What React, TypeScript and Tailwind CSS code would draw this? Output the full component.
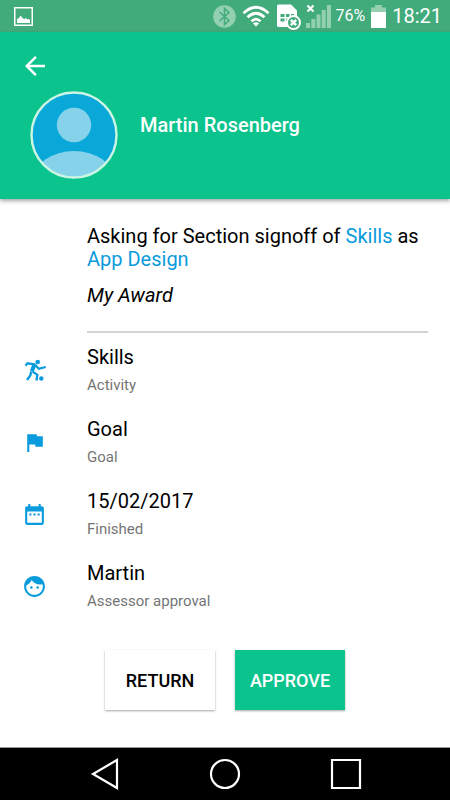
import type { ReactNode } from "react";
import { MdArrowBack, MdDateRange, MdFace, MdFlag } from "react-icons/md";

function StatusBar() {
  return (
    <div className="flex h-8 items-center bg-[#42ab7b] pr-2 pl-3.5 text-white">
      <svg width="19" height="19" viewBox="0 0 19 19" aria-label="Screenshot saved" role="img">
        <rect x="0.75" y="0.75" width="17.5" height="17.5" fill="none" stroke="white" strokeWidth="1.5" />
        <path d="M3 16v-4l2-1 1.5-2.5L9 11.5l1.5.5 1.4-.9 1.6 1.4 1.2-.4 1.3 1V16z" fill="white" />
      </svg>

      <div className="ml-auto flex items-center">
        <svg width="23" height="23" viewBox="0 0 23 23" aria-label="Bluetooth" role="img">
          <circle cx="11.5" cy="11.5" r="11.3" fill="#93cfb1" />
          <path d="M6.5 7l9.5 8.5-4.5 4v-16l4.5 4L6.500 16" fill="none" stroke="#42ab7b" strokeWidth="1.5" />
        </svg>
        <svg className="ml-1.5" width="28" height="22" viewBox="0 0 28 22" fill="none" stroke="white" strokeWidth="2.8" aria-label="Wi-Fi" role="img">
          <path d="M1.5 8.2Q14-3.8 26.5 8.2" />
          <path d="M5.5 12.3Q14 4.3 22.5 12.3" />
          <path d="M9.5 16.2Q14 12 18.5 16.2" />
          <path d="M11 18.5Q14 16 17 18.5L14 21.5z" fill="white" stroke="none" />
        </svg>
        <svg className="ml-1.5" width="25" height="27" viewBox="0 0 25 27" aria-label="No SIM" role="img">
          <path d="M2.5 1.5H15l6 6V24H2.500Q1 24 1 22.500V3q0-1.500 1.500-1.500z" fill="white" />
          <path d="M4.500 11h4v3h-4zM10 11h3.500v3H10zM15 11h3v3h-3zM4.500 15.500h4v3h-4zM10 15.500h2v3h-2z" fill="#42ab7b" />
          <circle cx="17.5" cy="19.5" r="6.5" fill="#42ab7b" stroke="white" strokeWidth="2" />
          <path d="M14.8 16.8l5.4 5.4m0-5.4l-5.4 5.4" stroke="white" strokeWidth="2.4" />
        </svg>
        <svg className="ml-1" width="26" height="25" viewBox="0 0 26 25" aria-label="No signal" role="img">
          <path d="M1 19h4v5H1zM6.300 15h4v9h-4zM11.500 10.500h4V24h-4zM16.700 6h4v18h-4zM21.900 1H26v23h-4.100z" fill="#93cfb1" />
          <path d="M2.5 1.5l6 6m0-6l-6 6" stroke="white" strokeWidth="2.2" />
        </svg>
        <span className="ml-1 text-base">76%</span>
        <svg className="ml-1.5" width="15" height="23" viewBox="0 0 15 23" aria-label="Battery" role="img">
          <path d="M4 0h7v2.5h4V7H0V2.500h4z" fill="#93cfb1" />
          <path d="M0 7h15v16H0z" fill="white" />
        </svg>
        <span className="ml-1.5 text-xl">18:21</span>
      </div>
    </div>
  );
}

function Avatar() {
  return (
    <svg width="88" height="88" viewBox="0 0 88 88" role="img" aria-label="Profile picture">
      <clipPath id="avatar-clip">
        <circle cx="44" cy="44" r="42" />
      </clipPath>
      <circle cx="44" cy="44" r="42" fill="#0aa8d9" />
      <g clipPath="url(#avatar-clip)" fill="#86d2ea">
        <circle cx="44" cy="34" r="17.2" />
        <ellipse cx="44" cy="88" rx="40" ry="28" />
      </g>
      <circle cx="44" cy="44" r="42.5" fill="none" stroke="#cdf5e3" strokeWidth="2.4" />
    </svg>
  );
}

function FootballIcon() {
  return (
    <svg width="25" height="25" viewBox="0 0 25 25" fill="none" stroke="currentColor" aria-hidden="true">
      <circle cx="15.7" cy="4" r="2.3" fill="currentColor" stroke="none" />
      <circle cx="19.3" cy="20.5" r="2.2" fill="currentColor" stroke="none" />
      <path d="M3.500 7.800L5.500 5.300L12.500 6.300L16.800 10.800L23.700 9" strokeWidth="2.2" />
      <path d="M12.300 7L9.800 13.300" strokeWidth="4" />
      <path d="M9.200 13.500L8.300 17.500L5 22" strokeWidth="2.3" />
      <path d="M10.500 13.600L15.300 16.800L14.500 22.500" strokeWidth="2.3" />
    </svg>
  );
}

function DetailRow({ icon, title, label }: { icon: ReactNode; title: string; label: string }) {
  return (
    <li className="flex h-18 items-center pl-[22px]">
      <span className="text-[#0a9bdc]">{icon}</span>
      <div className="ml-10 flex flex-col gap-1.5">
        <span className="text-xl leading-6 text-black">{title}</span>
        <span className="text-[15px] leading-5 text-[#757575]">{label}</span>
      </div>
    </li>
  );
}

function NavigationBar() {
  return (
    <nav className="mt-auto flex h-[53px] items-center justify-evenly border-t border-[#999] bg-black text-white">
      <button type="button" aria-label="Back">
        <svg width="32" height="32" viewBox="0 0 32 32" fill="none" stroke="currentColor" strokeWidth="2.2">
          <path d="M28 2v28L4 16z" />
        </svg>
      </button>
      <button type="button" aria-label="Home">
        <svg width="32" height="32" viewBox="0 0 32 32" fill="none" stroke="currentColor" strokeWidth="2.2">
          <circle cx="16" cy="16" r="14" />
        </svg>
      </button>
      <button type="button" aria-label="Recent apps">
        <svg width="32" height="32" viewBox="0 0 32 32" fill="none" stroke="currentColor" strokeWidth="2.2">
          <path d="M2 2h28v28H2z" />
        </svg>
      </button>
    </nav>
  );
}

export default function App() {
  return (
    <div className="flex min-h-screen flex-col bg-white font-['Roboto',sans-serif]">
      <StatusBar />

      <header className="bg-[#0ac38d] px-5 pt-[19px] pb-5 text-white shadow-[0_2px_4px_rgba(0,0,0,0.35)]">
        <button type="button" aria-label="Back" className="block">
          <MdArrowBack size={30} />
        </button>
        <div className="mt-2.5 ml-2.5 flex">
          <Avatar />
          <h1 className="mt-[22px] ml-[22px] text-xl leading-6 font-medium">Martin Rosenberg</h1>
        </div>
      </header>

      <main>
        <section className="mr-[22px] ml-[87px] border-b-2 border-[#d4d4d4] pt-[26px] pb-6 text-black">
          <p className="text-xl leading-[23px]">
            Asking for Section signoff of{" "}
            <a href="#skills" className="text-[#0a9bdc]">Skills</a> as{" "}
            <a href="#app-design" className="text-[#0a9bdc]">App Design</a>
          </p>
          <p className="mt-3 text-xl leading-6 italic">My Award</p>
        </section>

        <ul className="mt-px">
          <DetailRow icon={<FootballIcon />} title="Skills" label="Activity" />
          <DetailRow icon={<MdFlag size={25} />} title="Goal" label="Goal" />
          <DetailRow icon={<MdDateRange size={25} />} title="15/02/2017" label="Finished" />
          <DetailRow icon={<MdFace size={25} />} title="Martin" label="Assessor approval" />
        </ul>

        <div className="mt-7 mb-6 flex justify-center gap-5 text-lg font-medium">
          <button type="button" className="h-15 w-[110px] bg-white pt-0.5 text-black shadow-[0_1px_2px_rgba(0,0,0,0.35)]">
            RETURN
          </button>
          <button type="button" className="h-15 w-[110px] bg-[#0ac38d] pt-0.5 text-white shadow-[0_1px_2px_rgba(0,0,0,0.35)]">
            APPROVE
          </button>
        </div>
      </main>

      <NavigationBar />
    </div>
  );
}
